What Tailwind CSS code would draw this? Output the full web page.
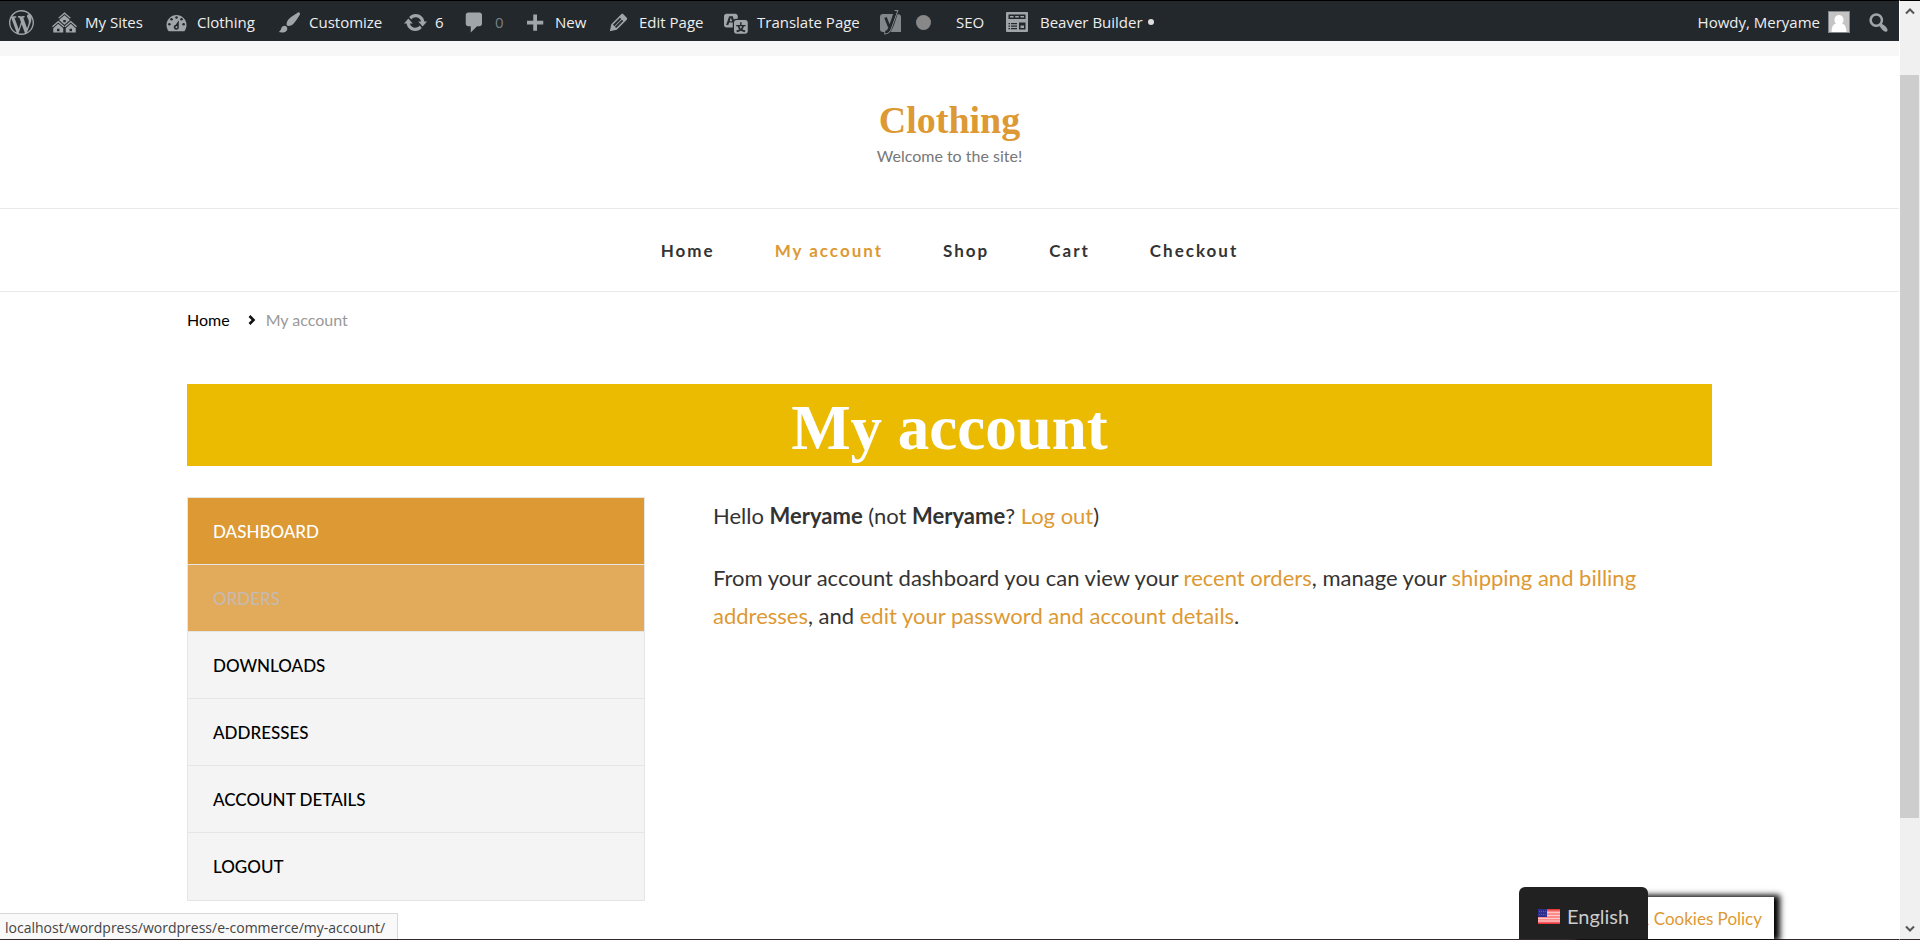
<!DOCTYPE html>
<html lang="en">
<head>
<meta charset="utf-8">
<meta name="viewport" content="width=device-width, initial-scale=1">
<title>My account – Clothing</title>
<script src="https://cdn.jsdelivr.net/npm/@tailwindcss/browser@4"></script>
</head>
<body class="flex min-h-screen overflow-hidden bg-white font-['Lato',sans-serif] text-[#333]">
<div class="relative flex min-w-0 flex-1 flex-col border-b border-[#35292a]">

  <!-- Admin bar -->
  <nav aria-label="Toolbar" class="flex h-[41px] items-center border-t border-black bg-[#23282d] pt-[2px] pl-[9px] pr-2 font-['Open_Sans',sans-serif] text-[15px] whitespace-nowrap text-[#eee]">
    <a href="#" aria-label="About WordPress" class="w-[43px] shrink-0">
      <svg class="size-[25px] fill-[#a0a5aa]" viewBox="0 0 20 20"><path d="M20 10c0-5.51-4.49-10-10-10C4.48 0 0 4.49 0 10c0 5.52 4.48 10 10 10 5.51 0 10-4.48 10-10zM7.78 15.37L4.37 6.22c.55-.02 1.17-.08 1.17-.08.5-.06.44-1.13-.06-1.11 0 0-1.45.11-2.37.11-.18 0-.37 0-.58-.01C4.12 2.69 6.87 1.11 10 1.11c2.33 0 4.45.87 6.05 2.34-.68-.11-1.65.39-1.65 1.58 0 .74.45 1.36.9 2.1.35.61.55 1.36.55 2.46 0 1.49-1.4 5-1.4 5l-3.03-8.37c.54-.02.82-.17.82-.17.5-.05.44-1.25-.06-1.22 0 0-1.44.12-2.38.12-.87 0-2.33-.12-2.33-.12-.5-.03-.56 1.2-.06 1.22l.92.08 1.26 3.41zM17.41 10c.24-.64.74-1.87.43-4.25.7 1.29 1.05 2.71 1.05 4.25 0 3.29-1.73 6.24-4.4 7.78.97-2.59 1.94-5.2 2.92-7.78zM6.1 18.09C3.12 16.65 1.11 13.53 1.11 10c0-1.3.23-2.48.72-3.59C3.25 10.3 4.67 14.2 6.1 18.09zm4.03-6.63l2.58 6.98c-.86.29-1.76.45-2.71.45-.79 0-1.57-.11-2.29-.33.81-2.38 1.62-4.74 2.42-7.1z"/></svg>
    </a>
    <a href="#" class="flex w-28 shrink-0 items-center gap-2">
      <svg class="size-[25px] fill-[#a0a5aa]" viewBox="0 0 20 20"><path d="M14.27 6.87L10 3.14 5.73 6.87 5 6.14l5-4.38 5 4.38zM14 8.42l-4.05 3.43L6 8.38v-.74l4-3.5 4 3.5v.78zM11 9.7V8H9v1.7h2zm-1.73 4.03L5 10 .73 13.73 0 13l5-4.38L10 13zm10 0L15 10l-4.27 3.73L10 13l5-4.38L20 13zM5 11l4 3.5V18H1v-3.5zm10 0l4 3.5V18h-8v-3.5zm-9 6v-2H4v2h2zm10 0v-2h-2v2h2z"/></svg>My Sites</a>
    <a href="#" class="flex w-[113px] shrink-0 items-center gap-2">
      <svg class="size-[25px] fill-[#a0a5aa]" viewBox="0 0 20 20"><path d="M3.76 17h12.48c1.1-1.37 1.76-3.11 1.76-5 0-4.42-3.58-8-8-8s-8 3.58-8 8c0 1.89.66 3.63 1.76 5z"/><g fill="#23282d"><circle cx="10" cy="5.9" r="1"/><circle cx="6" cy="7.4" r="1"/><circle cx="14" cy="7.4" r="1"/><circle cx="4.3" cy="11.4" r="1"/><circle cx="15.7" cy="11.4" r="1"/><path d="M11.9 8.2l-.1 5.2a2 2 0 1 1-2.4-1.6zM9.9 12.9a.8.8 0 1 0 .1 1.6.8.8 0 0 0-.1-1.6z"/></g></svg>Clothing</a>
    <a href="#" class="flex w-[126px] shrink-0 items-center gap-[7px]">
      <svg class="size-[25px] fill-[#a0a5aa]" viewBox="0 0 20 20"><path d="M18.33 3.57s.27-.8-.31-1.36c-.53-.52-1.22-.24-1.22-.24-.61.3-5.76 3.47-7.67 5.57-.86.96-2.06 3.79-1.09 4.82.92.98 3.96-.17 4.79-1 2.06-2.06 5.21-7.17 5.5-7.79zM1.4 17.65c2.37-1.56 1.46-3.41 3.23-4.64.93-.65 2.22-.62 3.08.29.63.67.8 2.57-.16 3.46-1.57 1.45-4 1.55-6.15.89z"/></svg>Customize</a>
    <a href="#" class="flex w-[59px] shrink-0 items-center gap-[7px]">
      <svg class="size-[25px] fill-[#a0a5aa]" viewBox="0 0 20 20"><path d="M10.2 3.28c3.53 0 6.43 2.61 6.92 6h2.08l-3.5 4-3.5-4h2.32c-.45-1.97-2.21-3.45-4.32-3.45-1.45 0-2.73.71-3.54 1.78L4.95 5.66C6.23 4.2 8.11 3.28 10.2 3.28zm-.4 13.44c-3.52 0-6.43-2.61-6.92-6H.8l3.5-4c1.17 1.33 2.33 2.67 3.5 4H5.48c.45 1.97 2.21 3.45 4.32 3.45 1.45 0 2.73-.71 3.54-1.78l1.71 1.95c-1.28 1.46-3.15 2.38-5.25 2.38z"/></svg>6</a>
    <a href="#" class="flex w-[60px] shrink-0 items-center gap-2 text-[#7c8084]">
      <svg class="size-[25px] fill-[#a0a5aa]" viewBox="0 0 20 20"><path d="M5 2h9c1.1 0 2 .9 2 2v7c0 1.1-.9 2-2 2h-2l-5 5v-5H5c-1.1 0-2-.9-2-2V4c0-1.1.9-2 2-2z"/></svg>0</a>
    <a href="#" class="flex w-[84px] shrink-0 items-center gap-2">
      <svg class="size-[25px] fill-[#a0a5aa]" viewBox="0 0 20 20"><path d="M17 8.5v3h-5v5H9v-5H4v-3h5v-5h3v5h5z"/></svg>New</a>
    <a href="#" class="flex w-[118px] shrink-0 items-center gap-2">
      <svg class="size-[25px] fill-[#a0a5aa]" viewBox="0 0 20 20"><path d="M13.89 3.39l2.71 2.72c.46.46.42 1.24.03 1.64l-8.01 8.02-5.56 1.16 1.16-5.58s7.6-7.63 7.99-8.03c.39-.39 1.22-.39 1.68.07zm-2.73 2.79l-5.59 5.61 1.11 1.11 5.54-5.65zm-2.97 8.23l5.58-5.6-1.07-1.08-5.59 5.6z"/></svg>Edit Page</a>
    <a href="#" class="flex w-[155px] shrink-0 items-center gap-2">
      <svg class="size-[25px] fill-[#a0a5aa]" viewBox="0 0 20 20"><path d="M11 7H9.49c-.63 0-1.25.3-1.59.7L7 5H4.13l-2.39 7h1.69l.74-2H7v4H2c-1.1 0-2-.9-2-2V5c0-1.1.9-2 2-2h7c1.1 0 2 .9 2 2v2zM6.51 9H4.49l1-2.93zM10 8h7c1.1 0 2 .9 2 2v7c0 1.1-.9 2-2 2h-7c-1.1 0-2-.9-2-2v-7c0-1.1.9-2 2-2zm7.25 5v-1.08h-3.17V9.75h-1.16v2.17H9.75V13h1.28c.11.85.56 1.85 1.28 2.62-.87.36-1.89.62-2.31.62-.01.02.22.97.2 1.46.84 0 2.21-.5 3.28-1.15 1.09.65 2.48 1.15 3.34 1.15-.02-.49.2-1.44.2-1.46-.43 0-1.49-.27-2.38-.63.7-.77 1.14-1.77 1.25-2.61h1.36zm-3.81 1.93c-.5-.46-.85-1.13-1.01-1.93h2.09c-.17.8-.51 1.47-1 1.93l-.04.03s-.03-.02-.04-.03z"/></svg>Translate Page</a>
    <a href="#" aria-label="Yoast SEO" class="flex w-[77px] shrink-0 items-center gap-[14px]">
      <svg class="h-[26px] w-[23px]" viewBox="0 0 23 26"><path fill="#82878c" d="M4 5h11.500L9 23H4a3 3 0 0 1-3-3V8a3 3 0 0 1 3-3zM18.500 5.300A3 3 0 0 1 22 8v15H11.500c3-4 5-11.500 7-17.700z"/><path fill="none" stroke="#82878c" stroke-width="1.200" d="M15.500 1.500h3.200L12 20c-1.300 3.600-3 4.700-6.200 4.800v-2.600"/><path fill="none" stroke="#23282d" stroke-width="2.600" d="M6.500 8.500l3.700 9.300M16.500 2.500L11 18c-1.200 3.600-2.200 5-4.700 5.300"/></svg>
      <span class="size-[15px] rounded-full bg-[#888]"></span></a>
    <a href="#" class="w-[49px] shrink-0">SEO</a>
    <a href="#" class="flex shrink-0 items-center gap-[11px]">
      <svg class="size-6" viewBox="0 0 24 24"><rect x="1" y="2" width="22" height="20" rx="1" fill="#a0a5aa"/><path fill="#23282d" d="M3.500 4.500h17V9h-17zM14 12.500h6.500v7H14zM3.500 13h1.500v1.300H3.500zM3.500 15.500h1.500v1.300H3.500zM3.500 18h1.500v1.300H3.500zM6 13h6v1.300H6zM6 15.500h6v1.300H6zM6 18h6v1.300H6z"/><path fill="#a0a5aa" d="M5 6h3.600v1.600H5zM10.200 6h3.600v1.600h-3.600zM15.400 6H19v1.600h-3.600zM15.500 15.500H19V18h-3.500z"/></svg>
      <span class="flex items-center gap-[5px]">Beaver Builder <span class="mb-px size-[6px] rounded-full bg-[#ddd]"></span></span></a>
    <a href="#" class="ml-auto flex shrink-0 items-center gap-2">Howdy, Meryame
      <svg class="size-[22px]" viewBox="0 0 22 22"><rect x=".5" y=".5" width="21" height="21" fill="#c4c4c4" stroke="#82878c"/><path fill="#fff" d="M11 4a4.500 4.800 0 0 1 3 8.400c2.800.8 4.300 3 4.500 8.600h-15c.2-5.600 1.700-7.800 4.500-8.600A4.500 4.800 0 0 1 11 4z"/></svg></a>
    <button type="button" aria-label="Search" class="ml-4 shrink-0">
      <svg class="size-[25px] fill-[#a0a5aa]" viewBox="0 0 20 20"><path d="M12.14 4.18c1.87 1.87 2.11 4.75.72 6.89.12.1.22.21.36.31.2.16.47.36.81.59.34.24.56.39.66.47.42.31.73.57.94.78.32.32.6.65.84 1 .25.35.44.69.59 1.04.14.35.21.68.18 1-.02.32-.14.59-.36.81s-.49.34-.81.36c-.31.02-.65-.04-.99-.19-.35-.14-.7-.34-1.04-.59-.35-.24-.68-.52-1-.84-.21-.21-.47-.52-.77-.93-.1-.13-.25-.35-.47-.66-.22-.32-.4-.57-.56-.78-.16-.2-.29-.35-.44-.5-2.07 1.09-4.69.76-6.44-.98-2.14-2.15-2.14-5.64 0-7.78 2.15-2.15 5.63-2.15 7.78 0zm-1.41 6.36c1.36-1.37 1.36-3.58 0-4.95-1.37-1.37-3.59-1.37-4.95 0-1.37 1.37-1.37 3.58 0 4.95 1.36 1.37 3.58 1.37 4.95 0z"/></svg>
    </button>
  </nav>

  <!-- Site header -->
  <header class="border-t-[15px] border-[#f7f7f7] text-center">
    <div class="flex h-[153px] flex-col items-center justify-center border-b border-[#e9e9e9] pt-[3px]">
      <a href="#" class="font-['Liberation_Serif',serif] text-[38px] leading-[44px] font-bold text-[#dd9933]">Clothing</a>
      <p class="text-[16px] leading-7 text-[#777]">Welcome to the site!</p>
    </div>
    <nav aria-label="Primary" class="flex h-[83px] items-center justify-center gap-[60px] border-b border-[#e9e9e9] pt-px text-[17px] font-bold tracking-[2px]">
      <a href="#">Home</a>
      <a href="#" class="text-[#dd9933]">My account</a>
      <a href="#">Shop</a>
      <a href="#">Cart</a>
      <a href="#">Checkout</a>
    </nav>
  </header>

  <main class="mx-[187px] flex flex-col">
    <nav aria-label="Breadcrumb" class="flex items-center pt-4 text-[16px] leading-6">
      <a href="#" class="text-black">Home</a>
      <svg class="ml-[18px] mr-[10px] h-3 w-2" viewBox="0 0 8 12"><path d="M1.500 2l4 4-4 4" fill="none" stroke="#111" stroke-width="2.600"/></svg>
      <span class="text-[#999]">My account</span>
    </nav>
    <h1 class="mt-[52px] h-[82px] bg-[#eabb00] text-center font-['Liberation_Serif',serif] text-[63px] leading-[88px] font-bold text-white">My account</h1>

    <div class="mt-[31px] flex justify-between">
      <ul class="w-[30%] border border-[#e5e5e5] text-[17px] font-medium text-black uppercase">
        <li class="border-b border-[#e5e5e5]"><a href="#" class="block bg-[#dd9933] px-[25px] pt-[21px] pb-[19px] leading-[26px] text-white">Dashboard</a></li>
        <li class="border-b border-[#e5e5e5]"><a href="#" class="block bg-[#e1ab5b] px-[25px] pt-[21px] pb-[19px] leading-[26px] text-[#c6b9ae]">Orders</a></li>
        <li class="border-b border-[#e5e5e5]"><a href="#" class="block bg-[#f4f4f4] px-[25px] pt-[21px] pb-[19px] leading-[26px]">Downloads</a></li>
        <li class="border-b border-[#e5e5e5]"><a href="#" class="block bg-[#f4f4f4] px-[25px] pt-[21px] pb-[19px] leading-[26px]">Addresses</a></li>
        <li class="border-b border-[#e5e5e5]"><a href="#" class="block bg-[#f4f4f4] px-[25px] pt-[21px] pb-[19px] leading-[26px]">Account details</a></li>
        <li><a href="#" class="block bg-[#f4f4f4] px-[25px] pt-[21px] pb-5 leading-[26px]">Logout</a></li>
      </ul>
      <div class="flex w-[999px] flex-col gap-6 text-[22px] leading-[38px]">
        <p>Hello <strong>Meryame</strong> (not <strong>Meryame</strong>? <a href="#" class="text-[#dd9933]">Log out</a>)</p>
        <p>From your account dashboard you can view your <a href="#" class="text-[#dd9933]">recent orders</a>, manage your <a href="#" class="text-[#dd9933]">shipping and billing<br>addresses</a>, and <a href="#" class="text-[#dd9933]">edit your password and account details</a>.</p>
      </div>
    </div>
  </main>

  <!-- Browser link preview -->
  <div class="absolute bottom-0 left-0 border-t border-r border-[#d8d8d8] bg-[#f9f9f9] pt-[2px] pr-3 pl-[5px] font-['Open_Sans',sans-serif] text-[14px] leading-[23px] text-[#444]">localhost/wordpress/wordpress/e-commerce/my-account/</div>

  <!-- Cookie notice and language switcher -->
  <a href="#" class="absolute right-[125px] bottom-0 flex h-[42px] w-[200px] items-center justify-end bg-white pt-[2px] pr-3 text-[17px] text-[#dd9933] shadow-[4px_0_6px_2px_#000]">&amp; Cookies Policy</a>
  <button type="button" class="absolute right-[251px] bottom-0 flex h-[52px] w-[129px] items-center gap-[7px] rounded-t-md bg-[#212121] pt-[6px] pl-[19px] text-[20px] text-[#ccc]">
    <svg class="h-[15px] w-[22px]" viewBox="0 0 22 15"><path fill="#ff8a8a" d="M0 0h22v15H0z"/><path fill="#e83a3a" d="M0 0h22v1.500H0zM0 13.500h22V15H0z"/><path stroke="#ffc9c9" d="M0 3.500h22M0 6.500h22M0 9.500h22M0 12h22"/><path fill="#2f2f8f" d="M0 0h9v8H0z"/><path stroke="#5a5ab0" stroke-dasharray="1 1" d="M1 2.500h7M1 5.500h7"/></svg>
    English</button>
</div>

<!-- Page scrollbar -->
<div aria-hidden="true" class="flex w-[21px] shrink-0 flex-col items-center border-t border-b border-l border-t-black border-b-[#35292a] border-l-white bg-[#f0f0f0]">
  <svg class="mt-[6px] h-2 w-[10px]" viewBox="0 0 10 8"><path d="M1 6.500l4-4 4 4" fill="none" stroke="#555" stroke-width="2"/></svg>
  <div class="mt-[60px] mr-px w-[19px] grow bg-[#cdcdcd]"></div>
  <svg class="mt-[107px] mb-[6px] h-2 w-[10px]" viewBox="0 0 10 8"><path d="M1 1.500l4 4 4-4" fill="none" stroke="#555" stroke-width="2"/></svg>
</div>
</body>
</html>
